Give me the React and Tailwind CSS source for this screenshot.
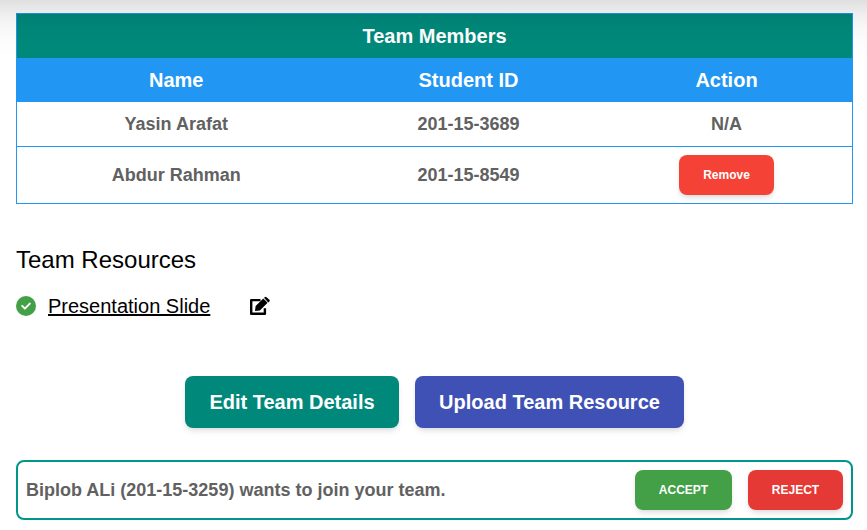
const members = [
  { name: "Yasin Arafat", id: "201-15-3689", removable: false },
  { name: "Abdur Rahman", id: "201-15-8549", removable: true },
];

const columns = "grid grid-cols-[318.5px_266px_250px] items-center text-center";
const buttonShadow = "shadow-[0_4px_6px_-1px_rgba(0,0,0,0.1),0_2px_4px_-1px_rgba(0,0,0,0.06)]";

function CheckIcon() {
  return (
    <svg viewBox="0 0 20 20" className="size-5">
      <circle cx="10" cy="10" r="10" fill="#43a047" />
      <path d="M6.2 9.9l2.7 2.7 4.9-5" fill="none" stroke="#fff" strokeWidth="2" strokeLinecap="round" strokeLinejoin="round" />
    </svg>
  );
}

function EditIcon() {
  return (
    <svg viewBox="0 0 20 20" className="ml-10 size-5">
      <path d="M10.5 4.1H1.2V17.8H14.9V12.3" fill="none" stroke="currentColor" strokeWidth="2.4" strokeLinejoin="round" />
      <path d="M5 15l.6-4.9L13.3 2.4l4.3 4.3-7.7 7.7z" fill="currentColor" />
      <path d="M14 1.8l.7-.6q.9-.8 1.8 0l2.9 2.5q.8.9 0 1.8l-1.1 1z" fill="currentColor" />
    </svg>
  );
}

export default function App() {
  return (
    <div className="relative h-[530px] overflow-hidden bg-white px-4 pr-[14px] pt-[13px] font-['Liberation_Sans',Arial,sans-serif] text-black">
      <section className="h-[191px] border border-[#2196f3] font-bold">
        <h2 className="h-11 bg-[#00897b] text-center text-xl leading-[45px] text-white">Team Members</h2>
        <div className={columns + " h-11 bg-[#2196f3] text-xl leading-[44px] text-white"}>
          <span>Name</span>
          <span>Student ID</span>
          <span>Action</span>
        </div>
        {members.map((m) => (
          <div
            key={m.id}
            className={columns + (m.removable ? " h-14" : " h-[45px] border-b border-[#2196f3]") + " text-lg text-[#616161]"}
          >
            <span>{m.name}</span>
            <span>{m.id}</span>
            {m.removable ? (
              <button className={"h-10 w-[95px] justify-self-center rounded-lg bg-[#f44336] text-xs text-white " + buttonShadow}>Remove</button>
            ) : (
              <span>N/A</span>
            )}
          </div>
        ))}
      </section>

      <h3 className="mt-10 text-2xl leading-8">Team Resources</h3>
      <div className="mt-4 flex h-7 items-center text-xl">
        <CheckIcon />
        <a className="ml-3 underline">Presentation Slide</a>
        <EditIcon />
      </div>

      <div className="mt-14 flex justify-center gap-4 text-xl font-bold text-white">
        <button className={"h-[52px] w-[214px] rounded-lg bg-[#00897b] " + buttonShadow}>Edit Team Details</button>
        <button className={"h-[52px] w-[269px] rounded-lg bg-[#3f51b5] " + buttonShadow}>Upload Team Resource</button>
      </div>

      <div className="mt-8 flex h-[60px] items-center rounded-lg border-2 border-[#009688] px-2 text-lg font-bold text-[#616161]">
        <span>Biplob ALi (201-15-3259) wants to join your team.</span>
        <button className={"ml-auto h-10 w-[97px] rounded-lg bg-[#43a047] text-xs text-white " + buttonShadow}>ACCEPT</button>
        <button className={"ml-4 h-10 w-[95px] rounded-lg bg-[#e53935] text-xs text-white " + buttonShadow}>REJECT</button>
      </div>

      {/* shadow cast by the bar above the page */}
      <div className="pointer-events-none absolute inset-x-0 top-0 h-[58px] bg-[linear-gradient(to_bottom,rgba(0,0,0,0.125)_0px,rgba(0,0,0,0.07)_13px,rgba(0,0,0,0.035)_25px,rgba(0,0,0,0.01)_40px,transparent_58px)]" />
    </div>
  );
}
